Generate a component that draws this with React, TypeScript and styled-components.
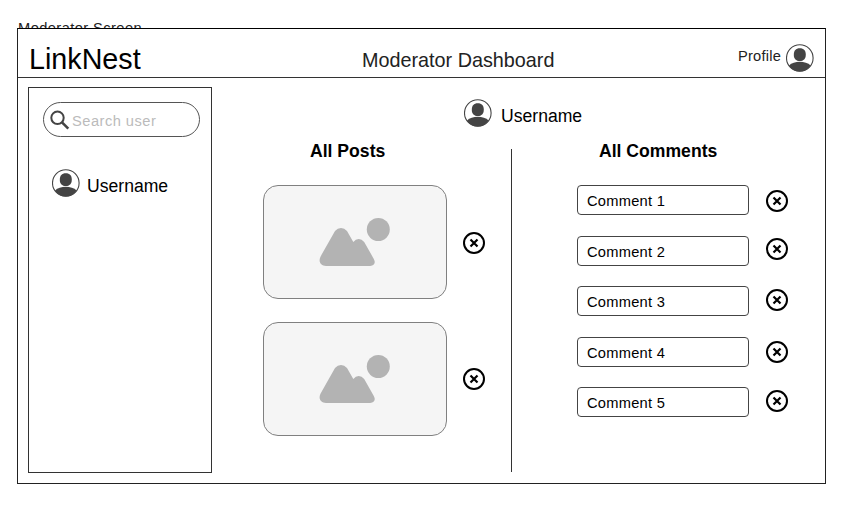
import React from "react";
import styled, { createGlobalStyle } from "styled-components";

const GlobalStyle = createGlobalStyle`
  * { box-sizing: border-box; }
  body {
    margin: 0;
    background: #fff;
    color: #000;
    font-family: "Liberation Sans", Arial, sans-serif;
  }
  svg { display: block; flex: none; }
`;

const Page = styled.div`
  display: flow-root;
  width: 854px;
  height: 507px;
  overflow: hidden;
`;

const ScreenLabel = styled.div`
  height: 20px;
  margin: 18px 0 -10px 17px;
  padding-left: 1px;
  font-size: 14.67px;
  line-height: 20px;
  letter-spacing: 0.42px;
  color: #222;
`;

const Frame = styled.div`
  position: relative;
  width: 809px;
  height: 456px;
  margin-left: 17px;
  border: 1px solid #222;
  border-top-color: #000;
  background: #fff;
`;

const Header = styled.header`
  display: grid;
  grid-template-columns: 333px 1fr auto;
  height: 49px;
  padding: 0 11px;
  border-bottom: 1px solid #333;
`;

const Brand = styled.h1`
  margin: 10px 0 0;
  font-size: 28.7px;
  font-weight: 400;
  line-height: 40px;
`;

const PageTitle = styled.h2`
  margin: 16px 0 0;
  font-size: 19.8px;
  font-weight: 400;
  line-height: 30px;
  color: #222;
`;

const Profile = styled.div`
  display: flex;
  gap: 5px;
  padding-top: 15px;
`;

const ProfileText = styled.span`
  margin-top: 2px;
  font-size: 14.67px;
  line-height: 20px;
  letter-spacing: 0.2px;
  color: #222;
`;

const Body = styled.div`
  display: grid;
  grid-template-columns: 184px 1fr;
  padding: 9px 0 0 10px;
`;

const Sidebar = styled.aside`
  height: 386px;
  padding: 14px 11px 0 14px;
  border: 1px solid #333;
`;

const SearchBox = styled.div`
  display: flex;
  align-items: center;
  gap: 2px;
  width: 157px;
  height: 35px;
  padding-left: 6px;
  border: 1px solid #555;
  border-radius: 18px;
`;

const SearchText = styled.span`
  padding-top: 2px;
  font-size: 14.67px;
  letter-spacing: 0.48px;
  color: #bbb;
`;

const User = styled.div<{ $top: number; $left: number; $gap: number }>`
  display: flex;
  gap: ${(p) => p.$gap}px;
  height: 28px;
  margin: ${(p) => p.$top}px 0 0 ${(p) => p.$left}px;
`;

const UserName = styled.span`
  padding-top: 4px;
  font-size: 17.6px;
  line-height: 26px;
`;

const Content = styled.main`
  padding-top: 12px;
`;

const Columns = styled.div`
  display: grid;
  grid-template-columns: 299px 1px 1fr;
  margin-top: 22px;
`;

const Divider = styled.div`
  width: 1px;
  height: 323px;
  background: #333;
`;

const Column = styled.section<{ $inset: number }>`
  margin-top: -11px;
  padding-left: ${(p) => p.$inset}px;
`;

const ColumnTitle = styled.h3<{ $inset: number }>`
  margin: 0;
  padding-left: ${(p) => p.$inset}px;
  font-size: 17.6px;
  font-weight: 700;
  line-height: 26px;
`;

const Posts = styled.div`
  display: grid;
  gap: 23px;
  margin-top: 21px;
`;

const PostRow = styled.div`
  display: flex;
  gap: 15px;
`;

const PostImage = styled.div`
  display: flex;
  width: 184px;
  height: 114px;
  padding: 32px 0 0 55px;
  border: 1px solid #808080;
  border-radius: 15px;
  background: #f5f5f5;
`;

const Comments = styled.div`
  display: grid;
  grid-auto-rows: 30px;
  row-gap: 20.6px;
  margin-top: 21px;
`;

const CommentRow = styled.div`
  display: flex;
  gap: 15.6px;
`;

const Comment = styled.div`
  width: 172px;
  height: 30px;
  padding-left: 9px;
  border: 1px solid #444;
  border-radius: 4px;
  font-size: 14.67px;
  line-height: 30px;
  letter-spacing: 0.26px;
`;

const RemoveButton = styled.button<{ $top: number }>`
  width: 24px;
  height: 24px;
  margin-top: ${(p) => p.$top}px;
  padding: 0;
  border: 0;
  background: none;
`;

const Avatar = () => (
  <svg width="28" height="28" viewBox="0 0 28 28">
    <circle cx="13.8" cy="14" r="13.3" fill="#fff" stroke="#444" strokeWidth="1.1" />
    <path
      d="M13.8 4.3C17.8 4.3 19.8 6.6 19.8 10.7C19.8 14.7 17.5 17 13.8 17S7.8 14.7 7.8 10.7C7.8 6.6 9.8 4.3 13.8 4.3Z"
      fill="#444"
    />
    <path d="M3 21.5C5.5 18.9 9.6 17.8 13.8 17.8S22.1 18.9 24.6 21.5C22.2 25.5 18.2 27.5 13.8 27.5S5.4 25.5 3 21.5Z" fill="#444" />
  </svg>
);

const SearchIcon = () => (
  <svg width="20" height="20" viewBox="0 0 20 20" fill="none" stroke="#444">
    <circle cx="7.5" cy="7.8" r="6.2" strokeWidth="2" />
    <path d="M12 12.3L18.3 18.6" strokeWidth="2.6" />
  </svg>
);

const Landscape = () => (
  <svg width="72" height="50" viewBox="0 0 72 50" fill="#b3b3b3">
    <circle cx="59.3" cy="11.5" r="11.5" />
    <path d="M1.6 38.4L16 13.1Q18.6 9.9 22 9.9T28 13.1L34.3 24Q36.7 20.9 39.7 20.9T45.2 24L54.8 40.9C57 44.8 55.2 48 51.2 48H7C1.6 48-1 43.6 1.6 38.4Z" />
  </svg>
);

const Remove = ({ top }: { top: number }) => (
  <RemoveButton $top={top} aria-label="Remove">
    <svg width="24" height="24" viewBox="0 0 24 24" fill="none" stroke="#000">
      <circle cx="12" cy="12" r="10" strokeWidth="2" />
      <path d="M8.5 8.5L15.5 15.5M15.5 8.5L8.5 15.5" strokeWidth="2.2" />
    </svg>
  </RemoveButton>
);

const posts = [
  { id: 1, top: 46 },
  { id: 2, top: 45 },
];

const comments = [
  { text: "Comment 1", top: 4 },
  { text: "Comment 2", top: 1.9 },
  { text: "Comment 3", top: 1.5 },
  { text: "Comment 4", top: 3.5 },
  { text: "Comment 5", top: 1.3 },
];

export default function App() {
  return (
    <Page>
      <GlobalStyle />
      <ScreenLabel>Moderator Screen</ScreenLabel>
      <Frame>
        <Header>
          <Brand>LinkNest</Brand>
          <PageTitle>Moderator Dashboard</PageTitle>
          <Profile>
            <ProfileText>Profile</ProfileText>
            <Avatar />
          </Profile>
        </Header>
        <Body>
          <Sidebar>
            <SearchBox>
              <SearchIcon />
              <SearchText>Search user</SearchText>
            </SearchBox>
            <User $top={32} $left={9} $gap={7}>
              <Avatar />
              <UserName>Username</UserName>
            </User>
          </Sidebar>
          <Content>
            <User $top={0} $left={252} $gap={9}>
              <Avatar />
              <UserName>Username</UserName>
            </User>
            <Columns>
              <Column $inset={51}>
                <ColumnTitle $inset={47}>All Posts</ColumnTitle>
                <Posts>
                  {posts.map((post) => (
                    <PostRow key={post.id}>
                      <PostImage>
                        <Landscape />
                      </PostImage>
                      <Remove top={post.top} />
                    </PostRow>
                  ))}
                </Posts>
              </Column>
              <Divider />
              <Column $inset={65}>
                <ColumnTitle $inset={22}>All Comments</ColumnTitle>
                <Comments>
                  {comments.map((c) => (
                    <CommentRow key={c.text}>
                      <Comment>{c.text}</Comment>
                      <Remove top={c.top} />
                    </CommentRow>
                  ))}
                </Comments>
              </Column>
            </Columns>
          </Content>
        </Body>
      </Frame>
    </Page>
  );
}
